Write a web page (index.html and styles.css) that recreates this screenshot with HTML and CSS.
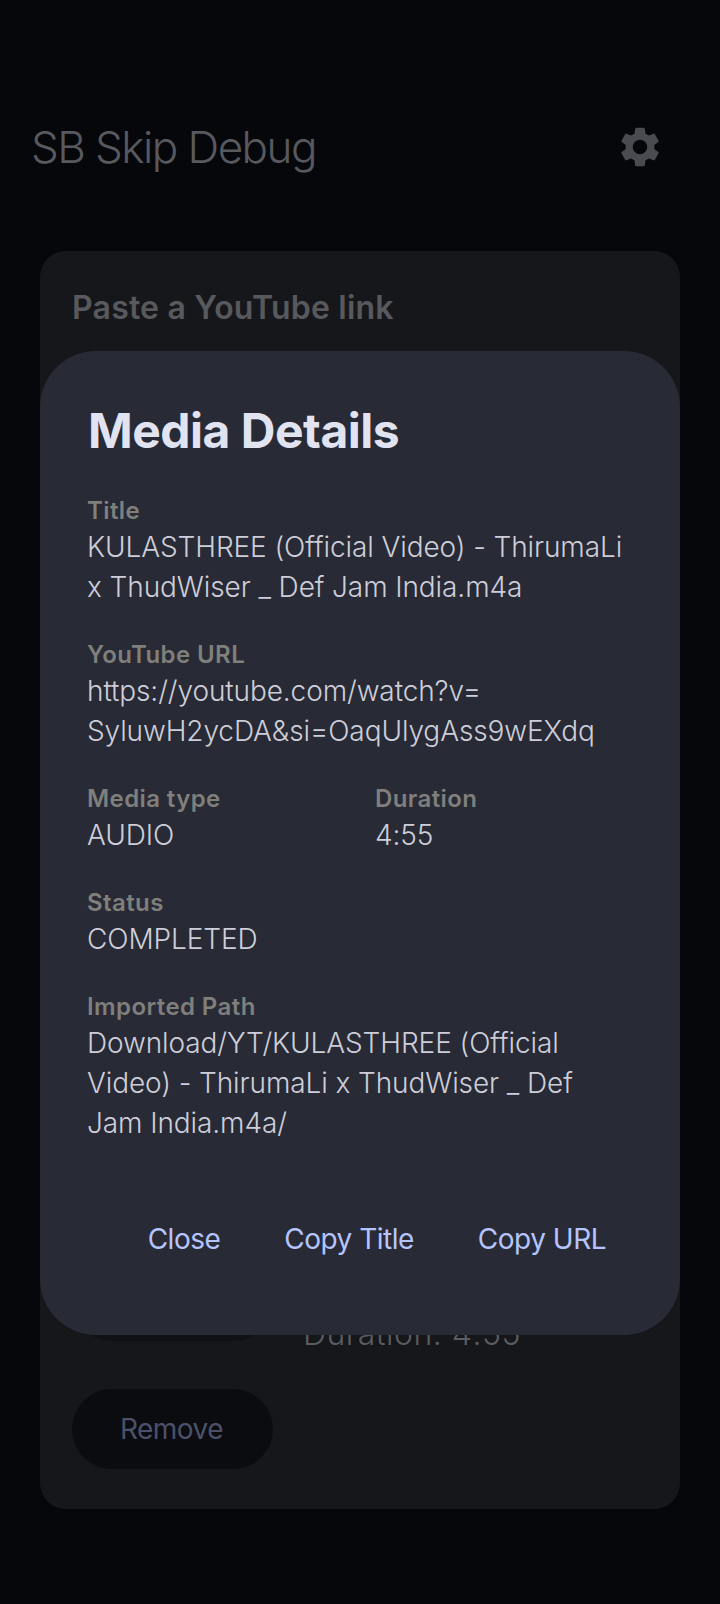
FILE: index.html
```html
<!DOCTYPE html>
<html lang="en">
<head>
<meta charset="utf-8">
<title>SB Skip Debug</title>
<link rel="stylesheet" href="styles.css">
</head>
<body>
<div class="app">
  <header class="topbar">
    <h1 class="app-title">SB Skip Debug</h1>
    <svg class="gear" viewBox="0 0 24 24" aria-hidden="true"><path d="M19.14 12.94c.04-.3.06-.61.06-.94 0-.32-.02-.64-.07-.94l2.03-1.58c.18-.14.23-.41.12-.61l-1.92-3.32c-.12-.22-.37-.29-.59-.22l-2.39.96c-.5-.38-1.03-.7-1.62-.94l-.36-2.54c-.04-.24-.24-.41-.48-.41h-3.84c-.24 0-.43.17-.47.41l-.36 2.54c-.59.24-1.13.57-1.62.94l-2.39-.96c-.22-.08-.47 0-.59.22L2.74 8.87c-.12.21-.08.47.12.61l2.03 1.58c-.05.3-.09.63-.09.94s.02.64.07.94l-2.03 1.58c-.18.14-.23.41-.12.61l1.92 3.32c.12.22.37.29.59.22l2.39-.96c.5.38 1.03.7 1.62.94l.36 2.54c.05.24.24.41.48.41h3.84c.24 0 .44-.17.47-.41l.36-2.54c.59-.24 1.13-.56 1.62-.94l2.39.96c.22.08.47 0 .59-.22l1.92-3.32c.12-.22.07-.47-.12-.61l-2.01-1.58zM12 15.6c-1.98 0-3.6-1.62-3.6-3.6s1.62-3.6 3.6-3.6 3.6 1.62 3.6 3.6-1.62 3.6-3.6 3.6z"/></svg>
  </header>
  <main class="card">
    <h2 class="card-title">Paste a YouTube link</h2>
    <div class="media-row">
      <div class="pill pill-hidden"></div>
      <div class="media-duration">Duration: 4:55</div>
    </div>
    <div class="pill">Remove</div>
  </main>
</div>
<section class="dialog">
  <h2 class="dialog-title">Media Details</h2>
  <div class="fields">
    <div class="field">
      <div class="label">Title</div>
      <div class="value">KULASTHREE (Official Video) - ThirumaLi x ThudWiser _ Def Jam India.m4a</div>
    </div>
    <div class="field">
      <div class="label">YouTube URL</div>
      <div class="value">https://youtube.com/watch?v=<br>SyluwH2ycDA&amp;si=OaqUlygAss9wEXdq</div>
    </div>
    <div class="field-pair">
      <div class="field">
        <div class="label">Media type</div>
        <div class="value">AUDIO</div>
      </div>
      <div class="field">
        <div class="label">Duration</div>
        <div class="value">4:55</div>
      </div>
    </div>
    <div class="field">
      <div class="label">Status</div>
      <div class="value">COMPLETED</div>
    </div>
    <div class="field">
      <div class="label">Imported Path</div>
      <div class="value">Download/YT/KULASTHREE (Official Video) - ThirumaLi x ThudWiser _ Def Jam India.m4a/</div>
    </div>
  </div>
  <div class="actions">
    <span class="action">Close</span>
    <span class="action">Copy Title</span>
    <span class="action">Copy URL</span>
  </div>
</section>
</body>
</html>
```
FILE: styles.css
```css
* { box-sizing: border-box; }
html, body { margin: 0; padding: 0; }
body {
  position: relative;
  width: 720px;
  height: 1604px;
  overflow: hidden;
  background: #05070b;
  font-family: Inter, "Noto Sans", sans-serif;
}
.app { padding-top: 112px; }
.topbar {
  display: flex;
  align-items: center;
  justify-content: space-between;
  height: 70px;
  padding: 0 56px 0 31px;
}
.app-title {
  margin: 0;
  font-size: 44px;
  font-weight: 300;
  line-height: 70px;
  letter-spacing: -1.55px;
  color: #58595e;
}
.gear { width: 48px; height: 48px; fill: #4a4b51; }
.card {
  display: flex;
  flex-direction: column;
  align-items: flex-start;
  height: 1258px;
  margin: 69px 40px 0;
  padding: 33px 32px 32px;
  border-radius: 26px;
  background: #16171b;
}
.card-title {
  margin: 0;
  font-size: 32px;
  font-weight: 600;
  line-height: 48px;
  letter-spacing: 0.2px;
  color: #58595d;
}
.media-row {
  display: flex;
  align-items: flex-end;
  gap: 30px;
  margin-top: 929px;
}
.media-duration {
  margin-bottom: -17px;
  font-size: 32px;
  font-weight: 300;
  line-height: 48px;
  letter-spacing: 0.5px;
  color: #5b5c60;
}
.pill {
  display: flex;
  align-items: center;
  justify-content: center;
  width: 201px;
  height: 80px;
  margin-top: 48px;
  padding-right: 2px;
  border-radius: 40px;
  background: #0b0c10;
  font-size: 28px;
  letter-spacing: -0.5px;
  color: #4b5169;
}
.pill-hidden { margin-top: 0; background: #101115; }
.dialog {
  position: absolute;
  top: 351px;
  left: 40px;
  width: 640px;
  height: 984px;
  padding: 48px 49px 0 47px;
  border-radius: 56px;
  background: #282a35;
}
.dialog-title {
  margin: 0 0 0 1px;
  font-size: 48px;
  font-weight: 700;
  line-height: 64px;
  letter-spacing: -0.5px;
  color: #e2e3f1;
}
.fields {
  display: flex;
  flex-direction: column;
  gap: 32px;
  margin-top: 32px;
}
.field-pair {
  display: grid;
  grid-template-columns: 1fr 1fr;
  gap: 32px;
}
.label {
  font-size: 24px;
  font-weight: 600;
  line-height: 32px;
  letter-spacing: 0.4px;
  color: #7f7f7c;
}
.value {
  font-size: 28px;
  font-weight: 300;
  line-height: 40px;
  letter-spacing: -0.1px;
  color: #cdced9;
}
.actions {
  display: flex;
  justify-content: flex-end;
  gap: 64px;
  margin-top: 76px;
  padding-right: 25px;
}
.action {
  font-size: 28px;
  font-weight: 400;
  line-height: 40px;
  letter-spacing: -0.5px;
  color: #b5c4ff;
}
```
